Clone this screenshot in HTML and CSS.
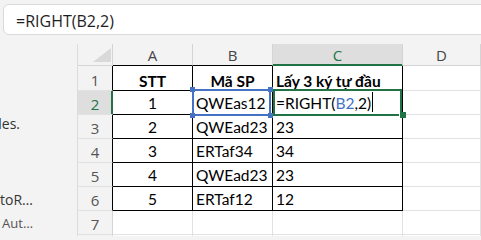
FILE: index.html
```html
<!DOCTYPE html>
<html lang="vi">
<head>
<meta charset="utf-8">
<title>RIGHT</title>
<link rel="stylesheet" href="styles.css">
</head>
<body>
<div class="topbar"><div class="fx">=RIGHT(B2,2)</div></div>
<div class="main">
  <aside class="pane">
    <div class="pl pl1"><span>Table Styles.</span></div>
    <div class="pl pl2"><span>AutoR…</span></div>
    <div class="pl pl3"><span>Get Aut…</span></div>
  </aside>
  <div class="sheet">
    <div class="c h corner"><svg class="tri" width="34" height="21" viewBox="0 0 34 21"><polygon points="33,4 33,18 15,18" fill="#d9d9d9"/></svg></div>
    <div class="c h tb">A</div>
    <div class="c h tb">B</div>
    <div class="c h tb sel">C</div>
    <div class="c h">D</div>

    <div class="c rh tb">1</div>
    <div class="c t r1 b ctr">STT</div>
    <div class="c t r1 b ctr">Mã SP</div>
    <div class="c t r1 b">Lấy 3 ký tự đầu</div>
    <div class="c r1"></div>

    <div class="c rh sel">2</div>
    <div class="c t ctr">1</div>
    <div class="c t">QWEas12</div>
    <div class="c t">=RIGHT(<span class="refc">B2</span>,2)<span class="caret"></span></div>
    <div class="c"></div>

    <div class="c rh tb">3</div>
    <div class="c t ctr">2</div>
    <div class="c t">QWEad23</div>
    <div class="c t">23</div>
    <div class="c"></div>

    <div class="c rh tb">4</div>
    <div class="c t ctr">3</div>
    <div class="c t">ERTaf34</div>
    <div class="c t">34</div>
    <div class="c"></div>

    <div class="c rh tb">5</div>
    <div class="c t ctr">4</div>
    <div class="c t">QWEad23</div>
    <div class="c t">23</div>
    <div class="c"></div>

    <div class="c rh tb">6</div>
    <div class="c t ctr">5</div>
    <div class="c t">ERTaf12</div>
    <div class="c t">12</div>
    <div class="c"></div>

    <div class="c rh">7</div>
    <div class="c"></div>
    <div class="c"></div>
    <div class="c"></div>
    <div class="c"></div>

    <div class="c rh">8</div>
    <div class="c"></div>
    <div class="c"></div>
    <div class="c"></div>
    <div class="c"></div>

    <div class="ref"><i class="tl"></i><i class="tr"></i><i class="bl"></i><i class="br"></i></div>
    <div class="active"><i class="fill"></i></div>
  </div>
</div>
</body>
</html>
```
FILE: styles.css
```css
* { box-sizing: border-box; }
html, body { margin: 0; padding: 0; }
body {
  width: 481px;
  height: 236px;
  overflow: hidden;
  background: #f3f3f3;
  font-family: "Open Sans", sans-serif;
}
.topbar {
  height: 44px;
  padding: 4px 0 0 3px;
}
.fx {
  width: 540px;
  height: 31px;
  background: #fff;
  border: 1px solid #dadada;
  border-radius: 6px;
  padding: 5px 0 0 12px;
  font-size: 16px;
  line-height: 22px;
  color: #1e1e1e;
  white-space: nowrap;
}
.main {
  display: flex;
  height: 192px;
}
.pane {
  width: 78px;
  flex: none;
  border-right: 1px solid #dcdcdc;
  background: #f3f3f3;
  display: flex;
  flex-direction: column;
  font-size: 14px;
  line-height: 19px;
  color: #333;
}
.pl {
  display: flex;
  justify-content: flex-end;
  overflow: hidden;
  white-space: nowrap;
}
.pl1 { width: 20px; margin-top: 70px; }
.pl2 { width: 33px; margin-top: 57px; }
.pl3 { width: 33px; margin-top: 5px; font-size: 13px; line-height: 18px; color: #555; }

.sheet {
  position: relative;
  flex: 1;
  display: grid;
  grid-template-columns: 35px 80px 80px 130px 1fr;
  grid-template-rows: 22px 25px repeat(7, 24px);
  overflow: hidden;
  background: #fff;
  font-family: Lato, "Open Sans", sans-serif;
  font-size: 15.5px;
  color: #000;
}
.c {
  border-right: 1px solid #e1e1e1;
  border-bottom: 1px solid #e1e1e1;
  display: flex;
  align-items: flex-end;
  padding: 0 3px 2px;
  line-height: 18px;
  white-space: nowrap;
  overflow: hidden;
  min-width: 0;
}
.r1 { padding-bottom: 0; }
.ctr { justify-content: center; }
.b { font-weight: 700; }
.t { border-right-color: #000; border-bottom-color: #000; }

.h {
  background: #f3f3f3;
  border-right-color: #d4d4d4;
  border-bottom-color: #d4d4d4;
  justify-content: center;
  padding: 0;
  font-family: "Open Sans", sans-serif;
  font-size: 15px;
  line-height: 20px;
  color: #444;
}
.h.tb { border-bottom-color: #000; }
.corner { padding: 0; align-items: stretch; }
.tri { display: block; }

.rh {
  background: #f3f3f3;
  border-right-color: #d4d4d4;
  border-bottom-color: #e1e1e1;
  justify-content: center;
  padding: 0;
  font-family: "Open Sans", sans-serif;
  font-size: 15px;
  line-height: 20px;
  color: #555;
}
.rh.tb { border-right-color: #000; }

.h.sel {
  background: #dedede;
  color: #217346;
  border-bottom-color: #217346;
  box-shadow: inset 0 -1px 0 #217346;
}
.rh.sel {
  background: #dedede;
  color: #217346;
  border-right-color: #217346;
  box-shadow: inset -1px 0 0 #217346;
}

.refc { color: #4472c4; }
.caret {
  display: inline-block;
  width: 1px;
  height: 20px;
  background: #000;
  margin-left: 1px;
  vertical-align: -4px;
}

.ref {
  position: absolute;
  left: 114px;
  top: 45px;
  width: 79px;
  height: 27px;
  border: 2px solid #4472c4;
}
.ref i {
  position: absolute;
  width: 5px;
  height: 5px;
  background: #4472c4;
}
.ref .tl { left: -4px; top: -4px; }
.ref .tr { right: -4px; top: -4px; }
.ref .bl { left: -4px; bottom: -4px; }
.ref .br { right: -4px; bottom: -4px; }

.active {
  position: absolute;
  left: 195px;
  top: 45px;
  width: 129px;
  height: 27px;
  border: 2px solid #217346;
}
.fill {
  position: absolute;
  right: -6px;
  bottom: -4px;
  width: 6px;
  height: 6px;
  background: #217346;
  box-shadow: -1px 0 0 #fff;
}
```
